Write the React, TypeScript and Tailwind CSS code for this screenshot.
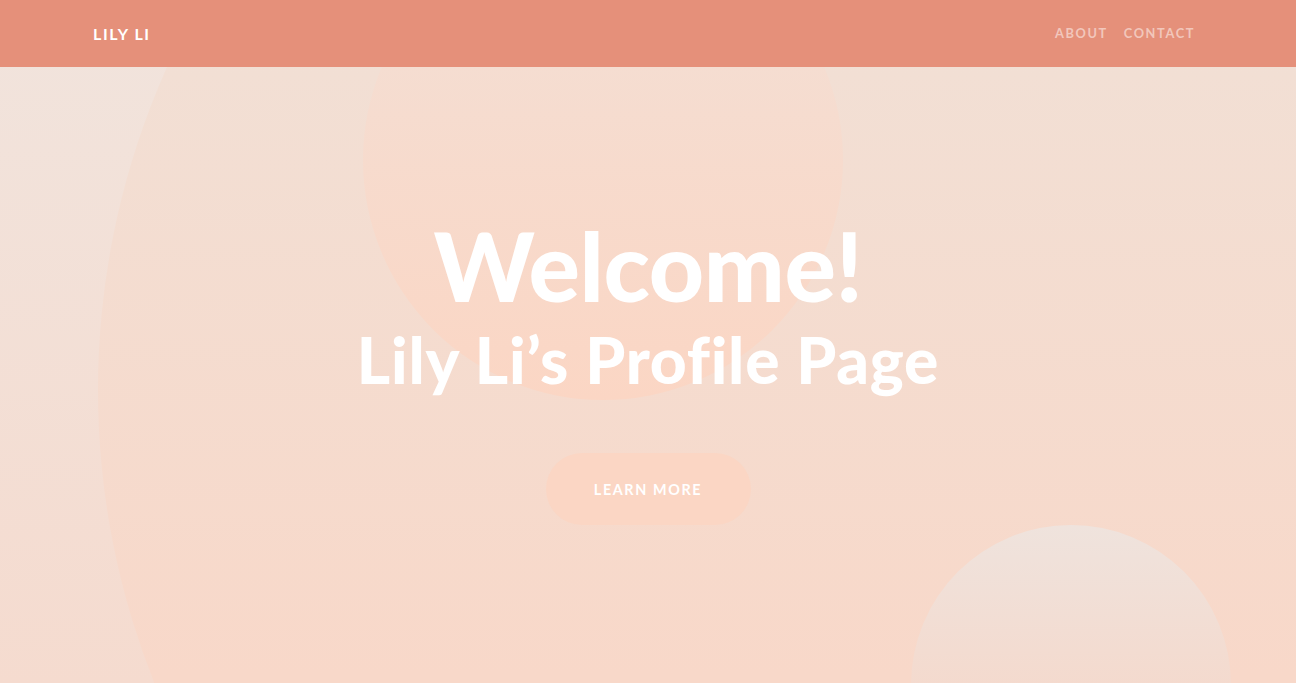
import React from "react";

export default function App() {
  return (
    <div
      className="relative h-[683px] w-full overflow-hidden bg-[linear-gradient(180deg,#f1e4dd_0%,#f5dbcf_100%)]"
      style={{ fontFamily: "Lato, 'Liberation Sans', sans-serif" }}
    >
      {/* decorative background circles */}
      <div className="absolute left-[98px] top-[-400px] h-[1580px] w-[1580px] rounded-full bg-[linear-gradient(180deg,#efe3dc_20%,#f2dfd4_30%,#f8d8c9_68%)]" />
      <div className="absolute left-[363px] top-[-80px] h-[480px] w-[480px] rounded-full bg-[linear-gradient(180deg,#f5ddd1_30%,#fbd6c4_100%)]" />
      <div className="absolute left-[911px] top-[525px] h-[320px] w-[320px] rounded-full bg-[linear-gradient(180deg,#efe3dd_0%,#f4dace_50%,#f8d3c2_100%)]" />

      {/* navbar */}
      <nav className="relative z-10 h-[67px] bg-[#e5907a]">
        <div className="mx-auto flex h-full max-w-[1140px] items-center justify-between px-[15px]">
          <span className="text-[16px] font-bold uppercase tracking-[1.6px] text-white">Lily Li</span>
          <ul className="flex items-center">
            <li className="px-2 text-[12.8px] font-bold uppercase tracking-[1.6px] text-white/50">About</li>
            <li className="pl-2 pr-2 text-[12.8px] font-bold uppercase tracking-[1.6px] text-white/50">Contact</li>
          </ul>
        </div>
      </nav>

      {/* hero */}
      <header className="relative z-10 flex flex-col items-center text-center [font-variant-ligatures:none]">
        <h1 className="mt-[150px] text-[96px] font-black leading-none tracking-[-0.4px] text-white">Welcome!</h1>
        <h2 className="mt-[15px] text-[64px] font-black leading-none tracking-[0.8px] text-white">Lily Li’s Profile Page</h2>
        <button className="mt-[61px] flex h-[72px] w-[205px] items-center justify-center rounded-full bg-[#fbd6c4] text-[14.4px] font-bold uppercase tracking-[1.6px] text-white">
          <span className="mt-[2px]">Learn More</span>
        </button>
      </header>
    </div>
  );
}
